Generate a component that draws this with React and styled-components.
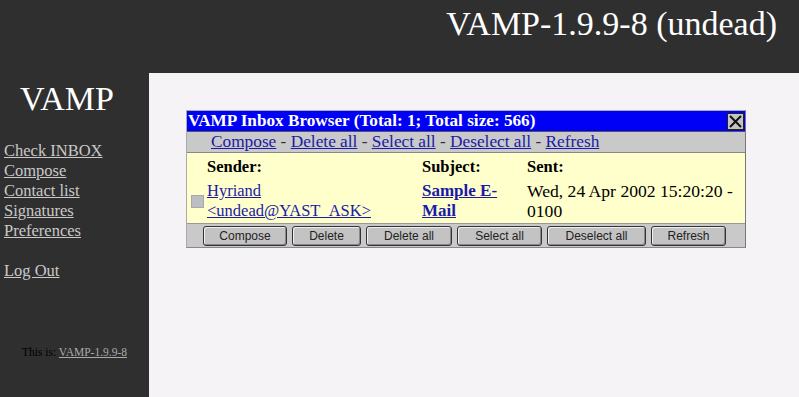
import React from "react"
import styled, { createGlobalStyle } from "styled-components"

const GlobalStyle = createGlobalStyle`
  html, body {
    margin: 0;
    padding: 0;
    background: #2f2f2f;
    font-family: "Liberation Serif", "Times New Roman", serif;
  }
`

const Page = styled.div`
  display: grid;
  grid-template-columns: 149px 1fr;
  grid-template-rows: 73px 1fr;
  width: 799px;
  height: 397px;
  overflow: hidden;
  background: #2f2f2f;
`

const Header = styled.header`
  grid-column: 1 / 3;
  display: flex;
  justify-content: flex-end;
  padding: 4px 22px 0 0;
  color: #fff;
  font-size: 34px;
  line-height: 40px;
`

const Sidebar = styled.nav`
  display: flex;
  flex-direction: column;
  padding-top: 6px;
`

const Logo = styled.div`
  color: #fff;
  font-size: 34px;
  line-height: 40px;
  padding-left: 20px;
  margin-bottom: 22px;
`

const NavLink = styled.a`
  display: block;
  padding-left: 4px;
  color: #c9c9c9;
  font-size: 16.5px;
  line-height: 20px;
  text-decoration: underline;
  margin-top: ${({ $gap }) => ($gap ? "20px" : "0")};
`

const Footer = styled.div`
  margin-top: 65px;
  text-align: center;
  font-size: 11.5px;
  color: #000;

  a {
    color: #aaa;
    text-decoration: underline;
  }
`

const Main = styled.main`
  background: #f5f3f5;
  padding: 37px 0 0 37px;
`

const Window = styled.div`
  width: 558px;
  border: 1px solid #aaa;
  border-right-color: #777;
  border-bottom-color: #888;
  background: #c9c9c9;
`

const TitleBar = styled.div`
  display: flex;
  justify-content: space-between;
  align-items: center;
  height: 20px;
  padding: 0 1px 0 1px;
  background: #0000f6;
  color: #fff;
  font-weight: bold;
  font-size: 17.2px;
  border-bottom: 1px solid #555;
`

const CloseBox = styled.div`
  width: 15px;
  height: 15px;
  background: #c4c4c4;
  border: 1px solid #222;
  display: flex;
  align-items: center;
  justify-content: center;
`

const Toolbar = styled.div`
  height: 20px;
  line-height: 20px;
  padding-left: 24px;
  font-size: 17.3px;
  color: #333;
  border-bottom: 1px solid #888;

  a {
    color: #1a1aa8;
    text-decoration: underline;
  }
`

const Table = styled.div`
  display: grid;
  grid-template-columns: 20px 215px 105px 1fr;
  row-gap: 4px;
  background: #ffffcc;
  padding: 4px 0 2px;
  font-size: 16.5px;
  line-height: 20px;
  color: #000;
`

const HeadCell = styled.div`
  font-weight: bold;
  grid-column: ${({ $col }) => $col};
`

const Cell = styled.div`
  font-size: ${({ $size }) => $size || "inherit"};

  a {
    color: #1a1aa8;
    text-decoration: underline;
    font-weight: ${({ $bold }) => ($bold ? "bold" : "normal")};
  }
`

const CheckCell = styled.div`
  display: flex;
  align-items: center;
  padding-left: 4px;
`

const Check = styled.span`
  display: block;
  width: 11px;
  height: 11px;
  background: #bdbdc6;
  border: 1px solid #a8a8a8;
`

const ButtonRow = styled.div`
  display: flex;
  gap: 5px;
  padding: 2px 0 1px 16px;
  border-top: 1px solid #999;
`

const Button = styled.button`
  width: ${({ $w }) => $w}px;
  height: 20px;
  padding: 0;
  font-family: "Liberation Sans", Arial, sans-serif;
  font-size: 12px;
  color: #222;
  background: #c3c3c3;
  border: 1px solid #333;
  border-radius: 3px;
  box-shadow: inset 1px 1px 0 #eee, inset -1px -1px 0 #888;
`

const links = ["Compose", "Delete all", "Select all", "Deselect all", "Refresh"]
const buttons = [
  ["Compose", 84],
  ["Delete", 69],
  ["Delete all", 86],
  ["Select all", 85],
  ["Deselect all", 99],
  ["Refresh", 75],
]

export default function App() {
  return (
    <>
      <GlobalStyle />
      <Page>
        <Header>VAMP-1.9.9-8 (undead)</Header>
        <Sidebar>
          <Logo>VAMP</Logo>
          <NavLink>Check INBOX</NavLink>
          <NavLink>Compose</NavLink>
          <NavLink>Contact list</NavLink>
          <NavLink>Signatures</NavLink>
          <NavLink>Preferences</NavLink>
          <NavLink $gap>Log Out</NavLink>
          <Footer>
            This is: <a>VAMP-1.9.9-8</a>
          </Footer>
        </Sidebar>
        <Main>
          <Window>
            <TitleBar>
              <span>VAMP Inbox Browser (Total: 1; Total size: 566)</span>
              <CloseBox>
                <svg width="13" height="13" viewBox="0 0 13 13">
                  <path d="M1 1 L12 12 M12 1 L1 12" stroke="#111" strokeWidth="2" />
                </svg>
              </CloseBox>
            </TitleBar>
            <Toolbar>
              {links.map((l, i) => (
                <React.Fragment key={l}>
                  {i > 0 && " - "}
                  <a>{l}</a>
                </React.Fragment>
              ))}
            </Toolbar>
            <Table>
              <HeadCell $col={2}>Sender:</HeadCell>
              <HeadCell $col={3}>Subject:</HeadCell>
              <HeadCell $col={4}>Sent:</HeadCell>
              <CheckCell>
                <Check />
              </CheckCell>
              <Cell>
                <a>
                  Hyriand
                  <br />
                  &lt;undead@YAST_ASK&gt;
                </a>
              </Cell>
              <Cell $bold $size="17px">
                <a>
                  Sample E-
                  <br />
                  Mail
                </a>
              </Cell>
              <Cell $size="17.6px">
                Wed, 24 Apr 2002 15:20:20 -
                <br />
                0100
              </Cell>
            </Table>
            <ButtonRow>
              {buttons.map(([b, w]) => (
                <Button key={b} $w={w}>
                  {b}
                </Button>
              ))}
            </ButtonRow>
          </Window>
        </Main>
      </Page>
    </>
  )
}
